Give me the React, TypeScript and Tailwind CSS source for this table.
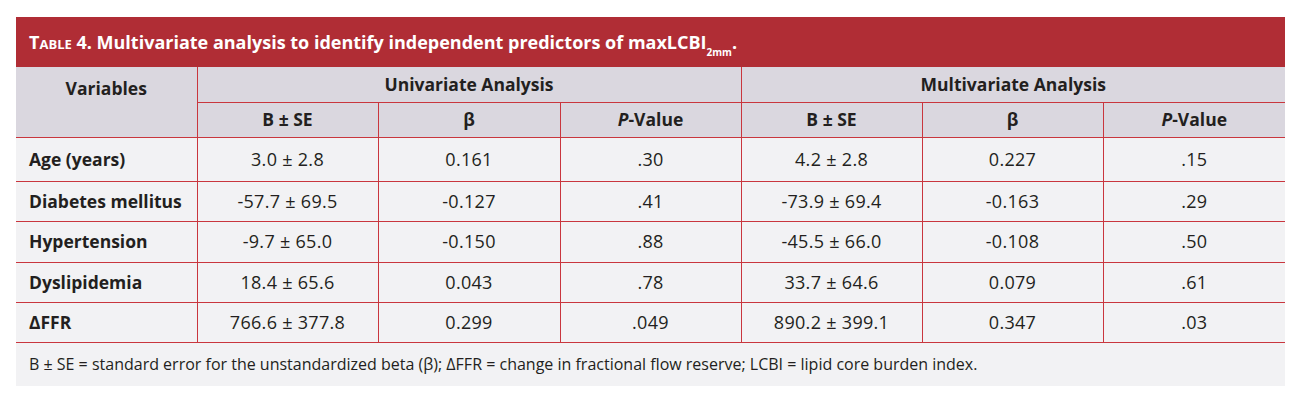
import React from 'react';

const rows = [
    ['Age (years)', '3.0 ± 2.8', '0.161', '.30', '4.2 ± 2.8', '0.227', '.15'],
    ['Diabetes mellitus', '-57.7 ± 69.5', '-0.127', '.41', '-73.9 ± 69.4', '-0.163', '.29'],
    ['Hypertension', '-9.7 ± 65.0', '-0.150', '.88', '-45.5 ± 66.0', '-0.108', '.50'],
    ['Dyslipidemia', '18.4 ± 65.6', '0.043', '.78', '33.7 ± 64.6', '0.079', '.61'],
    ['ΔFFR', '766.6 ± 377.8', '0.299', '.049', '890.2 ± 399.1', '0.347', '.03'],
];

const rowHeights = ['h-[44px]', 'h-[40px]', 'h-[41px]', 'h-[40px]', 'h-[40px]'];

function PValue() {
    return (
        <>
            <span className="italic">P</span>-Value
        </>
    );
}

export default function App() {
    return (
        <div className="w-[1300px] h-[406px] bg-white pt-[17px] pl-[16px] font-['Open_Sans','Liberation_Sans',sans-serif] text-[#231f20]">
            <div className="w-[1269px]">
                <div className="h-[50px] bg-[#b02d35] flex items-center pl-[13px] text-white font-bold text-[18px]">
                    <span>
                        <span className="[font-variant:small-caps]">Table</span> 4. Multivariate analysis to identify independent predictors of maxLCBI
                        <sub className="text-[10px] align-[-5px]">2mm</sub>.
                    </span>
                </div>
                <table className="w-full table-fixed border-collapse text-[17.5px]">
                    <colgroup>
                        <col className="w-[181px]" />
                        <col className="w-[181px]" />
                        <col className="w-[182px]" />
                        <col className="w-[181px]" />
                        <col className="w-[181px]" />
                        <col className="w-[181px]" />
                        <col />
                    </colgroup>
                    <thead className="bg-[#dad7df] font-bold">
                        <tr className="h-[35px]">
                            <th rowSpan={2} className="border-b border-[#c9363e] border-r align-middle text-center pb-[28px]">
                                Variables
                            </th>
                            <th colSpan={3} className="border-b border-r border-[#c9363e] text-center">Univariate Analysis</th>
                            <th colSpan={3} className="border-b border-[#c9363e] text-center">Multivariate Analysis</th>
                        </tr>
                        <tr className="h-[35px]">
                            <th className="border-b border-r border-[#c9363e]">B ± SE</th>
                            <th className="border-b border-r border-[#c9363e]">β</th>
                            <th className="border-b border-r border-[#c9363e]"><PValue /></th>
                            <th className="border-b border-r border-[#c9363e]">B ± SE</th>
                            <th className="border-b border-r border-[#c9363e]">β</th>
                            <th className="border-b border-[#c9363e]"><PValue /></th>
                        </tr>
                    </thead>
                    <tbody className="bg-[#f2f2f4]">
                        {rows.map((r, i) => (
                            <tr key={i} className={rowHeights[i]}>
                                {r.map((c, j) => (
                                    <td
                                        key={j}
                                        className={
                                            'border-b border-[#c9363e] ' +
                                            (j < 6 ? 'border-r ' : '') +
                                            (j === 0
                                                ? 'text-left pl-[13px] font-bold'
                                                : 'text-center font-medium text-[18px] tracking-[0.3px]')
                                        }
                                    >
                                        {c}
                                    </td>
                                ))}
                            </tr>
                        ))}
                    </tbody>
                </table>
                <div className="h-[43px] bg-[#f2f2f4] flex items-center pl-[13px] text-[16px]">
                    B ± SE = standard error for the unstandardized beta (β); ΔFFR = change in fractional flow reserve; LCBI = lipid core burden index.
                </div>
            </div>
        </div>
    );
}
